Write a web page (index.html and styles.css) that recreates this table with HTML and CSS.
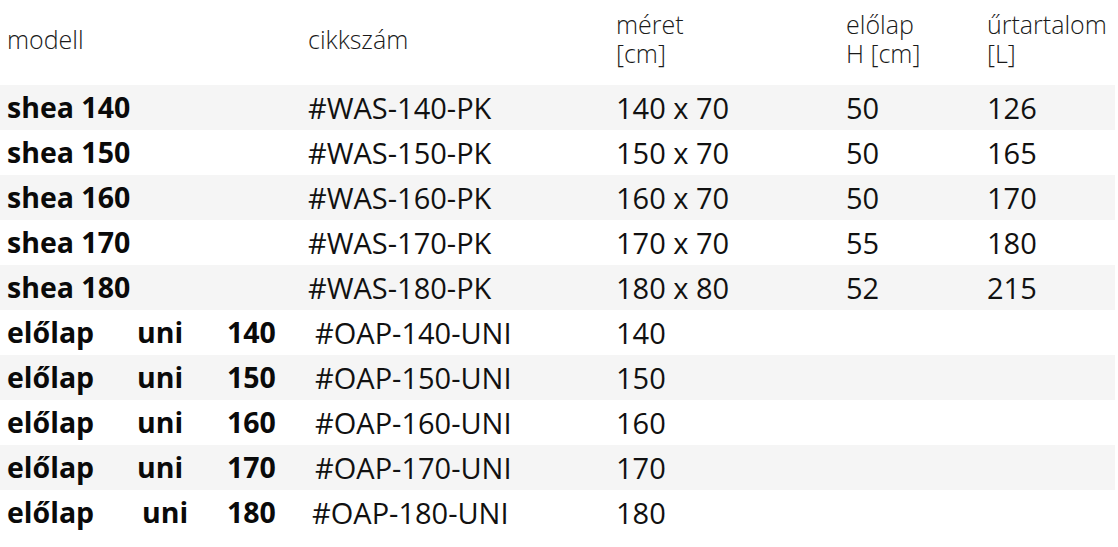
FILE: index.html
```html
<!DOCTYPE html>
<html lang="hu">
<head>
<meta charset="utf-8">
<title>shea</title>
<link rel="stylesheet" href="styles.css">
</head>
<body>
<table class="spec">
  <colgroup>
    <col class="c1"><col class="c2"><col class="c3"><col class="c4"><col class="c5">
  </colgroup>
  <thead>
    <tr class="head">
      <th class="first">modell</th>
      <th>cikkszám</th>
      <th>méret<br>[cm]</th>
      <th>előlap<br>H [cm]</th>
      <th>űrtartalom<br>[L]</th>
    </tr>
  </thead>
  <tbody>
    <tr class="odd"><td class="first name">shea 140</td><td>#WAS-140-PK</td><td>140 x 70</td><td>50</td><td>126</td></tr>
    <tr><td class="first name">shea 150</td><td>#WAS-150-PK</td><td>150 x 70</td><td>50</td><td>165</td></tr>
    <tr class="odd"><td class="first name">shea 160</td><td>#WAS-160-PK</td><td>160 x 70</td><td>50</td><td>170</td></tr>
    <tr><td class="first name">shea 170</td><td>#WAS-170-PK</td><td>170 x 70</td><td>55</td><td>180</td></tr>
    <tr class="odd"><td class="first name">shea 180</td><td>#WAS-180-PK</td><td>180 x 80</td><td>52</td><td>215</td></tr>
    <tr><td class="first name"><span class="w1">előlap</span><span class="w2">uni</span><span>140</span></td><td class="code">#OAP-140-UNI</td><td>140</td><td></td><td></td></tr>
    <tr class="odd"><td class="first name"><span class="w1">előlap</span><span class="w2">uni</span><span>150</span></td><td class="code">#OAP-150-UNI</td><td>150</td><td></td><td></td></tr>
    <tr><td class="first name"><span class="w1">előlap</span><span class="w2">uni</span><span>160</span></td><td class="code">#OAP-160-UNI</td><td>160</td><td></td><td></td></tr>
    <tr class="odd"><td class="first name"><span class="w1">előlap</span><span class="w2">uni</span><span>170</span></td><td class="code">#OAP-170-UNI</td><td>170</td><td></td><td></td></tr>
    <tr><td class="first name"><span class="w1 wide">előlap</span><span class="w2 narrow">uni</span><span>180</span></td><td class="code tight">#OAP-180-UNI</td><td>180</td><td></td><td></td></tr>
  </tbody>
</table>
</body>
</html>
```
FILE: styles.css
```css
html, body {
  margin: 0;
  padding: 0;
  background: #ffffff;
}

body {
  font-family: "Open Sans", "Liberation Sans", sans-serif;
  color: #111111;
}

.spec {
  border-collapse: collapse;
  table-layout: fixed;
  width: 1115px;
}

.c1 { width: 308px; }
.c2 { width: 308px; }
.c3 { width: 230px; }
.c4 { width: 141px; }
.c5 { width: 128px; }

.spec th,
.spec td {
  padding: 0;
  text-align: left;
  white-space: nowrap;
}

.head {
  height: 85px;
}

.head th {
  padding-bottom: 7px;
  font-weight: 300;
  font-size: 25px;
  line-height: 29px;
  color: #1a1a1a;
  vertical-align: middle;
}

.spec td {
  height: 45px;
  font-size: 29px;
  line-height: 45px;
  vertical-align: middle;
  color: #111111;
}

.spec .first {
  padding-left: 7px;
}

.spec .name {
  font-weight: 700;
  font-size: 28.5px;
  color: #0a0a0a;
}

.odd td {
  background: #f5f5f5;
}

.w1 {
  display: inline-block;
  width: 130px;
}

.w2 {
  display: inline-block;
  width: 90px;
}

.w1.wide { width: 135px; }
.w2.narrow { width: 85px; }

.spec .code {
  padding-left: 7px;
}

.spec .code.tight {
  padding-left: 4px;
}
```
